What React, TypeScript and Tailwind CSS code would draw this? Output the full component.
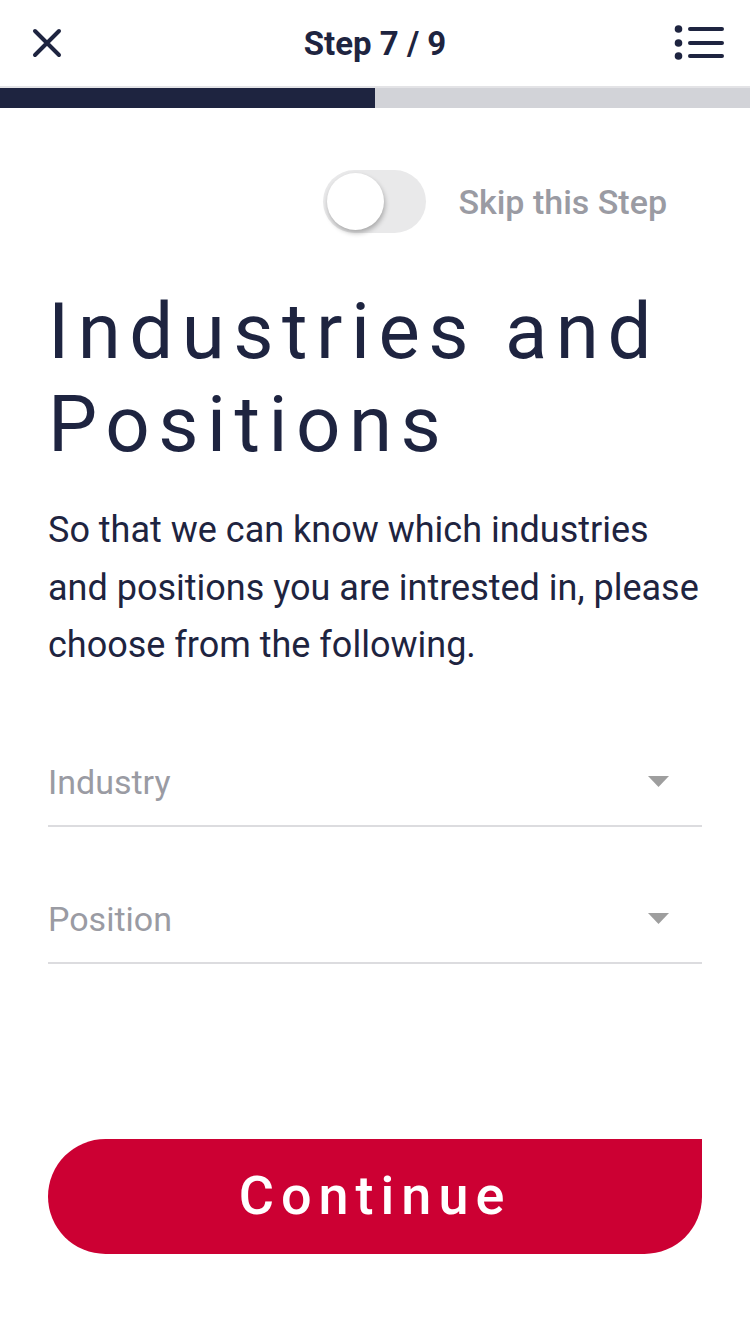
import React from "react";

const navy = "#1e2440";

function Field({ label }: { label: string }) {
  return (
    <div className="flex items-center justify-between border-b-2 border-[#dcdcdf] pb-[23px] pr-[33px]">
      <span className="text-[34px] leading-[40px] text-[#9a9ba3]">{label}</span>
      <svg width="21" height="11" viewBox="0 0 21 11">
        <polygon points="0,0 21,0 10.5,11" fill="#9e9e9e" />
      </svg>
    </div>
  );
}

export default function App() {
  return (
    <div
      className="w-[750px] min-h-[1334px] bg-white flex flex-col"
      style={{ fontFamily: "Roboto, 'Noto Sans', sans-serif" }}
    >
      {/* Header */}
      <div className="h-[86px] flex items-center justify-between px-[30px] relative">
        <svg width="32" height="32" viewBox="0 0 32 32" className="ml-[1px]">
          <path d="M4 4 L28 28 M28 4 L4 28" stroke={navy} strokeWidth="4" strokeLinecap="round" />
        </svg>
        <div className="absolute left-0 right-0 text-center text-[33px] font-bold text-[#1e2440] leading-none pointer-events-none">
          Step 7 / 9
        </div>
        <svg width="56" height="40" viewBox="0 0 56 40" className="mr-[-7px]">
          <circle cx="7.5" cy="6" r="3.8" fill={navy} />
          <circle cx="7.5" cy="20" r="3.8" fill={navy} />
          <circle cx="7.5" cy="33" r="3.8" fill={navy} />
          <path d="M19 6 H51 M19 20 H51 M19 33 H51" stroke={navy} strokeWidth="4" strokeLinecap="round" />
        </svg>
      </div>
      <div className="h-[2px] bg-[#e3e3e6]" />
      <div className="h-[20px] flex">
        <div className="w-[375px] bg-[#1e2440]" />
        <div className="flex-1 bg-[#d2d3d8]" />
      </div>

      {/* Content */}
      <div className="px-[48px] flex flex-col">
        <div className="flex items-center justify-end gap-[32px] mt-[62px] mr-[35px]">
          <div className="w-[103px] h-[63px] rounded-full bg-[#e9e9ea] relative">
            <div className="absolute left-[4px] top-[3px] w-[57px] h-[57px] rounded-full bg-white shadow-[1px_3px_5px_rgba(0,0,0,0.28)]" />
          </div>
          <span className="text-[34px] font-medium text-[#9a9ba3] leading-none">Skip this Step</span>
        </div>

        <h1 className="mt-[52px] text-[78px] leading-[93px] tracking-[8.5px] text-[#1e2440] font-normal">
          Industries and Positions
        </h1>

        <p className="mt-[31px] text-[36px] leading-[57.5px] text-[#1e2440]">
          So that we can know which industries and positions you are intrested in, please choose from the following.
        </p>

        <div className="mt-[87px]">
          <Field label="Industry" />
        </div>
        <div className="mt-[72px]">
          <Field label="Position" />
        </div>

        <button className="mt-[175px] h-[115px] w-full bg-[#cc0033] rounded-tl-[58px] rounded-bl-[58px] rounded-br-[58px] flex items-center justify-center">
          <span className="text-white text-[54px] font-medium tracking-[7px] leading-none">Continue</span>
        </button>
      </div>
    </div>
  );
}
